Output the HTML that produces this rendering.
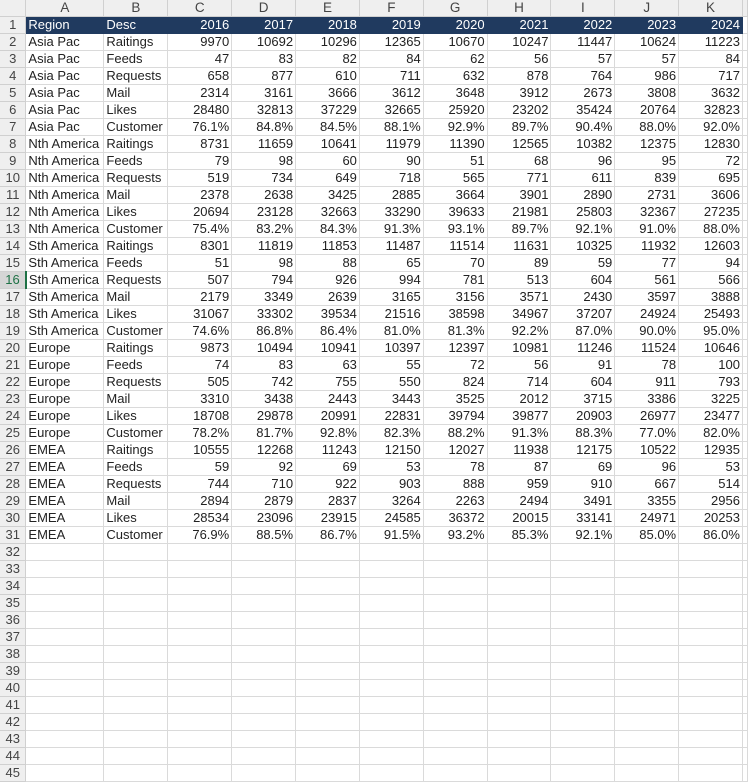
<!DOCTYPE html>
<html><head><meta charset="utf-8"><style>
body{margin:0;background:#fff;width:748px;height:771px;overflow:hidden;font-family:"Liberation Sans",Arial,sans-serif;font-size:13px;color:#222}
table{border-collapse:collapse;table-layout:fixed;position:absolute;left:0;top:0}
td{height:16px;padding:0 2px;border-right:1px solid #dadada;border-bottom:1px solid #dadada;white-space:nowrap;overflow:hidden;line-height:16px}
td.r{text-align:right}
tr.h td{background:#efefef;text-align:center;color:#444;border-color:#d0d0d0;font-size:13.5px}
td.rh{background:#efefef;text-align:center;color:#444;border-color:#d0d0d0;padding:0}
tr.t td.c{background:#203a5f;color:#fff;border-color:#203a5f}
td.sel{background:#d6d6d6!important;color:#1e7145!important;border-right:2px solid #1e7145!important}
</style></head><body>
<table>
<colgroup><col style="width:26px"><col style="width:78px"><col style="width:64px"><col style="width:64px"><col style="width:64px"><col style="width:64px"><col style="width:64px"><col style="width:64px"><col style="width:64px"><col style="width:64px"><col style="width:64px"><col style="width:64px"><col style="width:4px"></colgroup>
<tbody id="b">
<tr class="h"><td></td><td>A</td><td>B</td><td>C</td><td>D</td><td>E</td><td>F</td><td>G</td><td>H</td><td>I</td><td>J</td><td>K</td><td></td></tr>
<tr class="t"><td class="rh">1</td><td class="c">Region</td><td class="c">Desc</td><td class="c r">2016</td><td class="c r">2017</td><td class="c r">2018</td><td class="c r">2019</td><td class="c r">2020</td><td class="c r">2021</td><td class="c r">2022</td><td class="c r">2023</td><td class="c r">2024</td><td></td></tr>
</tbody></table>
<script>
var d=[
["Asia Pac","Raitings","9970 10692 10296 12365 10670 10247 11447 10624 11223"],
["Asia Pac","Feeds","47 83 82 84 62 56 57 57 84"],
["Asia Pac","Requests","658 877 610 711 632 878 764 986 717"],
["Asia Pac","Mail","2314 3161 3666 3612 3648 3912 2673 3808 3632"],
["Asia Pac","Likes","28480 32813 37229 32665 25920 23202 35424 20764 32823"],
["Asia Pac","Customer","76.1% 84.8% 84.5% 88.1% 92.9% 89.7% 90.4% 88.0% 92.0%"],
["Nth America","Raitings","8731 11659 10641 11979 11390 12565 10382 12375 12830"],
["Nth America","Feeds","79 98 60 90 51 68 96 95 72"],
["Nth America","Requests","519 734 649 718 565 771 611 839 695"],
["Nth America","Mail","2378 2638 3425 2885 3664 3901 2890 2731 3606"],
["Nth America","Likes","20694 23128 32663 33290 39633 21981 25803 32367 27235"],
["Nth America","Customer","75.4% 83.2% 84.3% 91.3% 93.1% 89.7% 92.1% 91.0% 88.0%"],
["Sth America","Raitings","8301 11819 11853 11487 11514 11631 10325 11932 12603"],
["Sth America","Feeds","51 98 88 65 70 89 59 77 94"],
["Sth America","Requests","507 794 926 994 781 513 604 561 566"],
["Sth America","Mail","2179 3349 2639 3165 3156 3571 2430 3597 3888"],
["Sth America","Likes","31067 33302 39534 21516 38598 34967 37207 24924 25493"],
["Sth America","Customer","74.6% 86.8% 86.4% 81.0% 81.3% 92.2% 87.0% 90.0% 95.0%"],
["Europe","Raitings","9873 10494 10941 10397 12397 10981 11246 11524 10646"],
["Europe","Feeds","74 83 63 55 72 56 91 78 100"],
["Europe","Requests","505 742 755 550 824 714 604 911 793"],
["Europe","Mail","3310 3438 2443 3443 3525 2012 3715 3386 3225"],
["Europe","Likes","18708 29878 20991 22831 39794 39877 20903 26977 23477"],
["Europe","Customer","78.2% 81.7% 92.8% 82.3% 88.2% 91.3% 88.3% 77.0% 82.0%"],
["EMEA","Raitings","10555 12268 11243 12150 12027 11938 12175 10522 12935"],
["EMEA","Feeds","59 92 69 53 78 87 69 96 53"],
["EMEA","Requests","744 710 922 903 888 959 910 667 514"],
["EMEA","Mail","2894 2879 2837 3264 2263 2494 3491 3355 2956"],
["EMEA","Likes","28534 23096 23915 24585 36372 20015 33141 24971 20253"],
["EMEA","Customer","76.9% 88.5% 86.7% 91.5% 93.2% 85.3% 92.1% 85.0% 86.0%"]];
var h="",b=document.getElementById("b");
for(var i=2;i<=45;i++){
 var r=d[i-2];
 h+='<tr><td class="rh'+(i==16?' sel':'')+'">'+i+'</td>';
 if(r){h+='<td>'+r[0]+'</td><td>'+r[1]+'</td>';r[2].split(" ").forEach(function(v){h+='<td class="r">'+v+'</td>'});}
 else{for(var k=0;k<11;k++)h+='<td></td>';}
 h+='<td></td></tr>';
}
b.insertAdjacentHTML("beforeend",h);
</script>
</body></html>
